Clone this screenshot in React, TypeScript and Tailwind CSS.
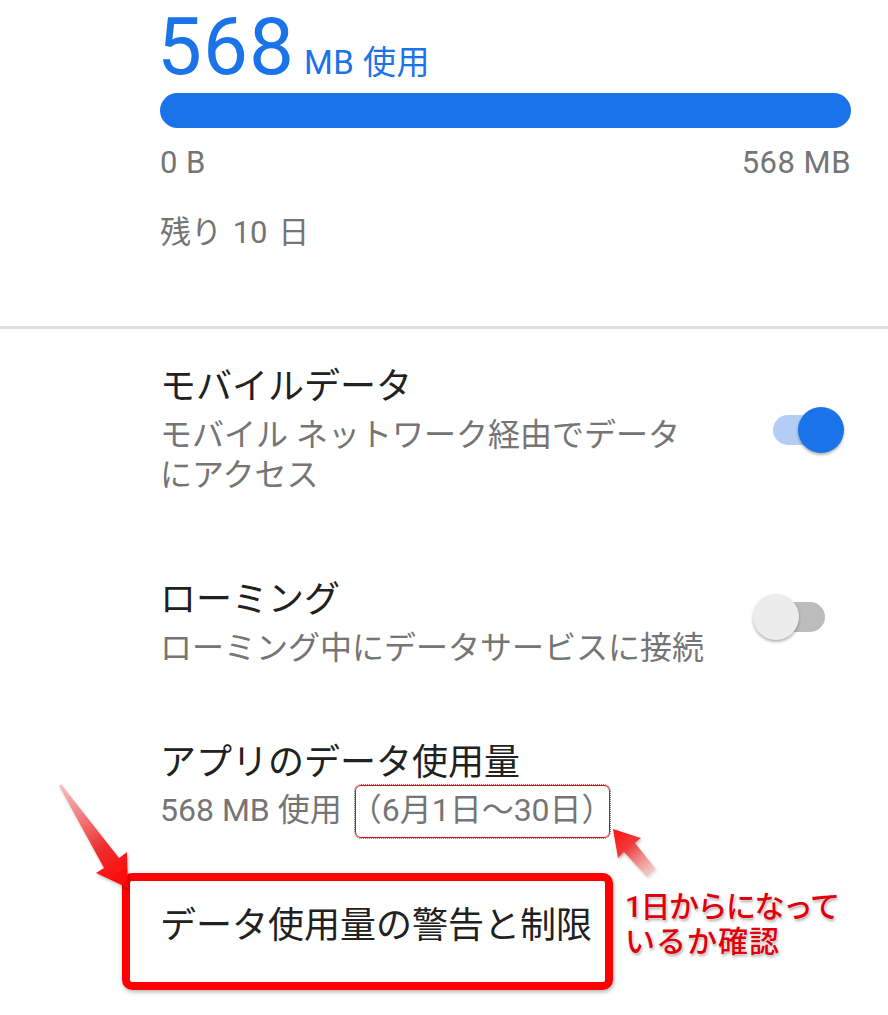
import { type ReactNode } from "react";

const FONT = "font-['Roboto','Noto_Sans_CJK_JP',sans-serif]";

function Toggle({ on }: { on: boolean }) {
  return (
    <div className="relative w-[91px] h-[46px] shrink-0">
      <div
        className={
          "absolute left-[20px] top-[8px] w-[52px] h-[30px] rounded-full " +
          (on ? "bg-[#b3cdf6]" : "bg-[#bcbcbc]")
        }
      />
      <div
        className={
          "absolute top-0 w-[46px] h-[46px] rounded-full shadow-[0_2px_3px_rgba(0,0,0,0.3)] " +
          (on ? "left-[45px] bg-[#1a73e8]" : "left-0 bg-[#ececec]")
        }
      />
    </div>
  );
}

function SettingRow({
  title,
  children,
  toggle,
  className,
  subClass,
  toggleClass,
}: {
  title: string;
  children?: ReactNode;
  toggle?: boolean;
  className?: string;
  subClass?: string;
  toggleClass?: string;
}) {
  return (
    <div className={"flex items-center pl-[160px] pr-[44px] " + (className ?? "")}>
      <div className="flex-1">
        <div className="text-[36px] leading-[44px] text-[#212121]">{title}</div>
        {children && (
          <div className={"text-[32px] leading-[40px] text-[#757575] " + (subClass ?? "")}>
            {children}
          </div>
        )}
      </div>
      {toggle !== undefined && (
        <div className={toggleClass ?? ""}>
          <Toggle on={toggle} />
        </div>
      )}
    </div>
  );
}

function Arrows() {
  return (
    <svg
      className="absolute inset-0 pointer-events-none"
      width="888"
      height="1015"
      viewBox="0 0 888 1015"
    >
      <defs>
        <linearGradient id="ga" x1="60" y1="785" x2="128" y2="888" gradientUnits="userSpaceOnUse">
          <stop offset="0" stopColor="#f5a0a0" stopOpacity="0.6" />
          <stop offset="0.6" stopColor="#ee3030" />
          <stop offset="1" stopColor="#ff0000" />
        </linearGradient>
        <linearGradient id="gb" x1="652" y1="874" x2="613" y2="829" gradientUnits="userSpaceOnUse">
          <stop offset="0" stopColor="#f6b0b0" stopOpacity="0.5" />
          <stop offset="0.6" stopColor="#ef3b3b" />
          <stop offset="1" stopColor="#ff1010" />
        </linearGradient>
        <filter id="sh" x="-20%" y="-20%" width="140%" height="140%">
          <feDropShadow dx="1" dy="2" stdDeviation="1.5" floodOpacity="0.25" />
        </filter>
      </defs>
      <polygon
        filter="url(#sh)"
        fill="url(#ga)"
        points="59,786 61,784 119,858 127,852 128,888 96,873 104,868"
      />
      <polygon
        filter="url(#sh)"
        fill="url(#gb)"
        points="656,869 635,843 641,838 613,829 618,858 624,852 647,877"
      />
    </svg>
  );
}

export default function App() {
  return (
    <div className={"relative w-[888px] h-[1015px] overflow-hidden bg-white " + FONT}>
      <div className="pl-[160px] pr-[37px]">
        <div className="flex items-baseline text-[#1a73e8]">
          <span className="text-[80px] leading-[94px] tracking-[1px] -ml-[3px]">568</span>
          <span className="ml-[9px] text-[33px] leading-none tracking-[0.5px]">MB 使用</span>
        </div>
        <div className="-mt-[1px] h-[35px] rounded-full bg-[#1a73e8]" />
        <div className="mt-[17px] flex justify-between text-[31px] leading-[36px] text-[#757575]">
          <span className="tracking-[0.5px]">0 B</span>
          <span className="tracking-[0.5px]">568 MB</span>
        </div>
        <div className="mt-[34px] text-[31px] leading-[36px] text-[#757575] [word-spacing:3px]">
          残り 10 日
        </div>
      </div>

      <div className="mt-[75px] h-[3px] bg-[#dedede]" />

      <SettingRow className="mt-[36px]" subClass="pt-[6px]" title="モバイルデータ" toggle={true}>
        モバイル ネットワーク経由でデータ
        <br />
        にアクセス
      </SettingRow>

      <SettingRow
        className="mt-[83px]"
        subClass="pt-[6px]"
        toggleClass="-mt-[12px]"
        title="ローミング"
        toggle={false}
      >
        ローミング中にデータサービスに接続
      </SettingRow>

      <SettingRow className="mt-[73px]" subClass="pt-[5px]" title="アプリのデータ使用量">
        568 MB 使用{" "}
        <span className="relative">
          （6月1日〜30日）
          <span className="absolute left-[5px] right-[4px] top-[-6px] bottom-[-9px] rounded-[6px] border border-[#d01010] outline-1 outline-dotted outline-[#777] outline-offset-0" />
        </span>
      </SettingRow>

      <SettingRow className="mt-[74px]" title="データ使用量の警告と制限" />

      <div className="absolute left-[122px] top-[873px] w-[491px] h-[117px] rounded-[10px] border-[8px] border-[#ff0000] shadow-[1px_2px_4px_rgba(0,0,0,0.3)]" />

      <Arrows />

      <div className="absolute left-[625px] top-[889px] text-[30px] leading-[35px] font-medium text-[#e0000b] [text-shadow:0_0_2px_#fff,1px_2px_3px_rgba(0,0,0,0.35)]">
        <div className="tracking-[-1.5px]">1日からになって</div>
        <div className="tracking-[1px]">いるか確認</div>
      </div>
    </div>
  );
}
